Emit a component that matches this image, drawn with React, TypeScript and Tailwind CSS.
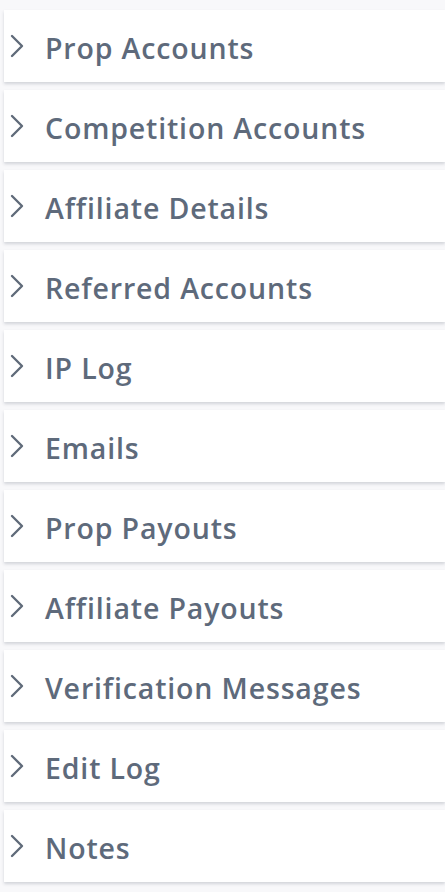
const sections = [
  "Prop Accounts",
  "Competition Accounts",
  "Affiliate Details",
  "Referred Accounts",
  "IP Log",
  "Emails",
  "Prop Payouts",
  "Affiliate Payouts",
  "Verification Messages",
  "Edit Log",
  "Notes",
];

function Chevron() {
  return (
    <svg width="16" height="26" viewBox="0 0 16 26" fill="none" className="shrink-0">
      <polyline
        points="3,3 13,13 3,23"
        stroke="#606b7a"
        strokeWidth="2.4"
        strokeLinecap="round"
        strokeLinejoin="round"
      />
    </svg>
  );
}

export default function App() {
  return (
    <div
      className="min-h-screen bg-[#f8f8fa] pt-[10px] pl-[4px]"
      style={{ fontFamily: '"Open Sans", "Liberation Sans", sans-serif' }}
    >
      <div className="flex flex-col gap-[8px]">
        {sections.map((s) => (
          <button
            key={s}
            className="flex h-[72px] w-full items-center bg-white pl-[5px] text-left shadow-[0_2px_3px_rgba(40,50,70,0.18)]"
          >
            <Chevron />
            <span className="ml-[20px] pt-[5px] text-[28.5px] font-semibold tracking-[0.85px] text-[#5e6a7b]">
              {s}
            </span>
          </button>
        ))}
      </div>
    </div>
  );
}
